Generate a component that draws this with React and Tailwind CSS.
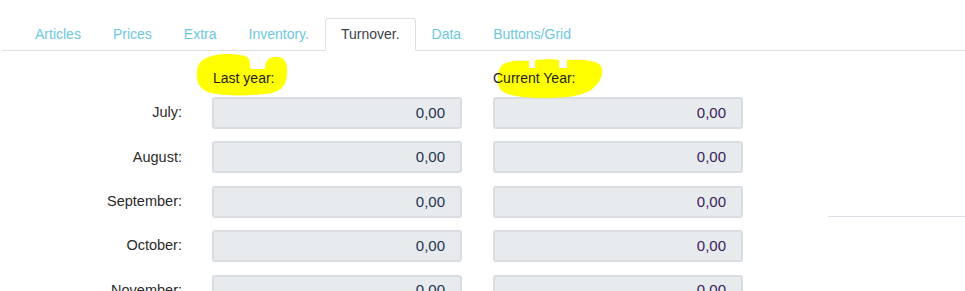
import React from 'react'

const tabs = ['Articles', 'Prices', 'Extra', 'Inventory.', 'Turnover.', 'Data', 'Buttons/Grid']
const months = ['July', 'August', 'September', 'October', 'November']

function Highlight({ variant }) {
  if (variant === 'last') {
    return (
      <svg className="pointer-events-none absolute left-[-17px] top-[-14px]" width="96" height="44" viewBox="0 0 96 44">
        <path
          d="M14 4 C22 0 44 0 52 4 C56 6 54 14 56 16 L70 16 C70 10 72 4 80 4 C90 3 93 10 92 22 C91 34 84 40 70 41 C50 43 30 43 16 40 C4 37 1 28 2 18 C3 10 7 6 14 4 Z"
          fill="#ffff00"
        />
      </svg>
    )
  }
  return (
    <svg className="pointer-events-none absolute left-[2px] top-[-9px]" width="112" height="42" viewBox="0 0 112 42">
      <path
        d="M6 8 C10 3 24 2 34 3 L34 10 L40 10 L40 2 C50 1 60 1 64 2 L64 10 L72 10 L72 2 C86 1 102 2 106 8 C110 16 104 26 96 32 C86 39 66 40 48 40 C28 40 12 38 6 32 C1 26 2 14 6 8 Z"
        fill="#ffff00"
      />
    </svg>
  )
}

function Field({ value, tone }) {
  return (
    <div
      className={`flex h-[32px] w-[250px] items-center justify-end rounded-[3px] border-2 border-[#d9dde2] bg-[#e8ebee] pr-[15px] text-[15px] ${tone}`}
    >
      {value}
    </div>
  )
}

export default function App() {
  return (
    <div className="h-[291px] w-[965px] overflow-hidden bg-white font-['Liberation_Sans',sans-serif] text-[14px]">
      <div className="pt-[18px]">
        <ul className="ml-[2px] flex border-b border-[#dcdfe6] pl-[17px] text-[14px]">
          {tabs.map((t) => (
            <li
              key={t}
              className={
                t === 'Turnover.'
                  ? '-mb-px flex h-[33px] items-center rounded-t-[4px] border border-[#dcdfe6] border-b-white bg-white px-[15px] text-[#3d3d4a]'
                  : 'flex h-[32px] items-center border border-transparent px-[15px] text-[#6cc8e0]'
              }
            >
              {t}
            </li>
          ))}
        </ul>
      </div>

      <div className="flex">
        <div className="w-[760px]">
          <div className="grid grid-cols-[182px_250px_250px] gap-x-[30px] pt-[16px]">
            <div />
            <div className="relative h-[22px] pl-[1px] text-[14px] leading-[22px] text-[#1e1e1e]">
              <Highlight variant="last" />
              <span className="relative">Last year:</span>
            </div>
            <div className="relative ml-[1px] h-[22px] text-[14px] leading-[22px] text-[#1e1e1e]">
              <Highlight variant="current" />
              <span className="relative">Current Year:</span>
            </div>
          </div>
          <div className="mt-[8px] flex flex-col gap-[12.4px]">
            {months.map((m) => (
              <div key={m} className="grid h-[32px] grid-cols-[182px_250px_250px] items-center gap-x-[30px]">
                <div className="text-right text-[14.5px] text-[#2a2a2a]">{m}:</div>
                <Field value="0,00" tone="text-[#1f3350]" />
                <div className="ml-[1px]">
                  <Field value="0,00" tone="text-[#3a1d5c]" />
                </div>
              </div>
            ))}
          </div>
        </div>
        <div className="flex-1 pl-[68px] pt-[165px]">
          <div className="border-t border-[#dcdfe6]" />
        </div>
      </div>
    </div>
  )
}
